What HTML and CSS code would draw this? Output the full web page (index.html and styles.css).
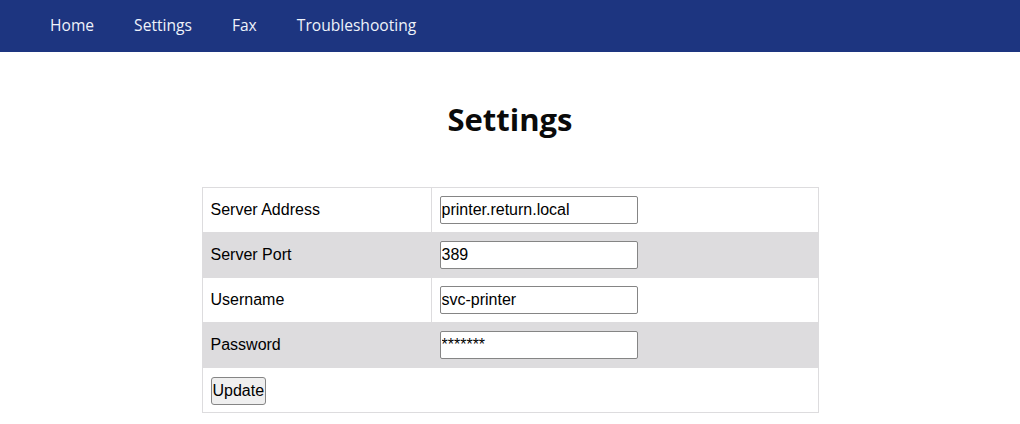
FILE: index.html
```html
<!DOCTYPE html>
<html lang="en">
<head>
<meta charset="utf-8">
<title>Settings</title>
<link rel="stylesheet" href="styles.css">
</head>
<body>
<nav class="topnav">
  <a class="nav-link" href="#">Home</a>
  <a class="nav-link" href="#">Settings</a>
  <a class="nav-link" href="#">Fax</a>
  <a class="nav-link" href="#">Troubleshooting</a>
</nav>
<main class="content">
  <h1 class="title">Settings</h1>
  <form class="settings-form">
    <table class="settings-table">
      <tr>
        <td class="label">Server Address</td>
        <td class="field"><input class="text-input" type="text" value="printer.return.local"></td>
      </tr>
      <tr class="alt">
        <td class="label">Server Port</td>
        <td class="field"><input class="text-input" type="text" value="389"></td>
      </tr>
      <tr>
        <td class="label">Username</td>
        <td class="field"><input class="text-input" type="text" value="svc-printer"></td>
      </tr>
      <tr class="alt">
        <td class="label">Password</td>
        <td class="field"><input class="text-input" type="text" value="*******"></td>
      </tr>
      <tr>
        <td class="label" colspan="2"><button class="btn" type="button">Update</button></td>
      </tr>
    </table>
  </form>
</main>
</body>
</html>
```
FILE: styles.css
```css
html, body {
  margin: 0;
  padding: 0;
  background: #ffffff;
}

body {
  font-family: "Liberation Sans", Arial, sans-serif;
  color: #000;
}

.topnav {
  display: flex;
  align-items: center;
  gap: 40px;
  height: 52px;
  padding-left: 50px;
  background: #1d3580;
}

.nav-link {
  font-family: "Open Sans", "Noto Sans", sans-serif;
  font-size: 15.6px;
  color: #eef2fa;
  text-decoration: none;
  line-height: 20px;
  margin-top: -2px;
}

.content {
  display: flex;
  flex-direction: column;
  align-items: center;
}

.title {
  font-family: "Open Sans", "Noto Sans", sans-serif;
  font-weight: 700;
  font-size: 31px;
  line-height: 40px;
  margin: 47px 0 48px;
  color: #0a0a0a;
}

.settings-table {
  width: 617px;
  border-collapse: collapse;
  border: 1px solid #dddcde;
}

.settings-table td {
  border: 1px solid #dddcde;
  height: 44px;
  padding: 0 8px;
  vertical-align: middle;
  font-size: 16px;
}

.settings-table td.label {
  width: 212px;
}

.settings-table tr.alt {
  background: #dddcde;
}

.text-input {
  box-sizing: border-box;
  width: 198px;
  height: 28px;
  padding: 1px 1px;
  border: 1px solid #858585;
  border-radius: 2px;
  font-family: "Liberation Sans", Arial, sans-serif;
  font-size: 16px;
  color: #000;
  background: #fff;
}

.btn {
  box-sizing: border-box;
  height: 28px;
  padding: 1px 1px;
  border: 1px solid #858585;
  border-radius: 3px;
  background: #efefef;
  font-family: "Liberation Sans", Arial, sans-serif;
  font-size: 16px;
  color: #000;
  margin-top: 1px;
}
```
